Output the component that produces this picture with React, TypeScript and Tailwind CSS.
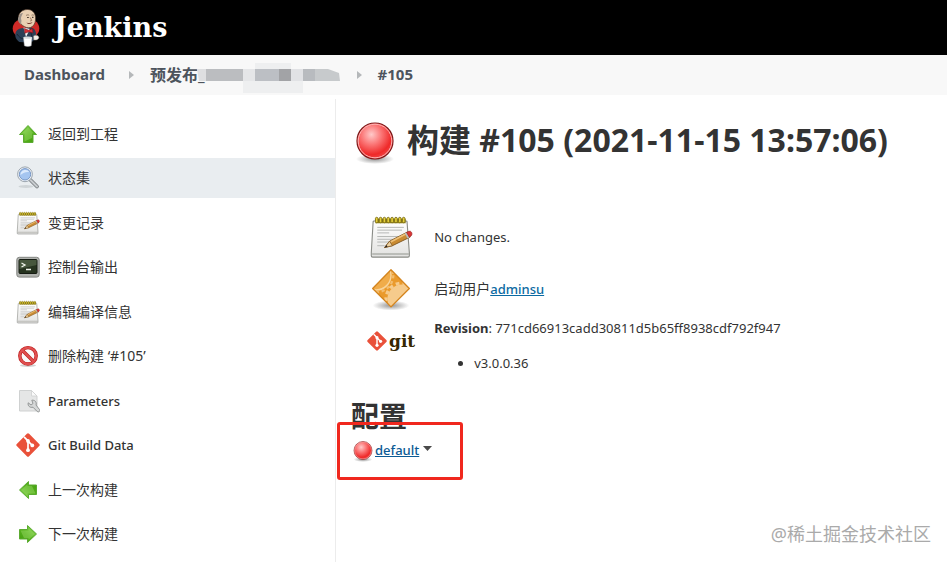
import type { ReactNode } from "react";

type IconProps = { className?: string };

type Task = {
  label: string;
  icon: ReactNode;
  active?: boolean;
  latin?: boolean;
};

function JenkinsLogo() {
  return (
    <svg viewBox="0 0 28 38" className="h-[38px] w-7 shrink-0" aria-hidden="true">
      <ellipse cx="14" cy="19.500" rx="13.300" ry="10.500" fill="#cf2a27" />
      <path d="M3.500 24c1-4 5-5 9-5l5-.5c4 0 6 2 6.500 6l-.5 5-3 3-5 1-8-.5c-3-2-5-5-4-9z" fill="#2c4057" />
      <path d="M5 25c2 3 4 5 8 5M18 20l2 8" fill="none" stroke="#16212e" strokeWidth=".8" />
      <path d="M6.500 8c.5-5 4.500-7.500 9-7.500s7.800 3 8 8c.2 4-.5 7-3.500 9.300-2 1.400-5 1.200-7.300 0C9 16 6.800 13 6.500 8z" fill="#e9d0b3" stroke="#4c382c" strokeWidth=".7" />
      <path d="M7 7.500c-1.500 1.500-1.500 4 0 6l2.200 2.200c-.5-2 .8-3.200 0-5.200-.8-2 .7-4 1.800-6.500-2.500 0-3.500 1.500-4 3.500z" fill="#9c9188" />
      <path d="M14 6.500c1.200-.8 2.200-.8 3.200-.2M19.500 6.200c1-.5 1.800-.3 2.500.2" fill="none" stroke="#7c6552" strokeWidth=".8" />
      <path d="M15.200 8.500h1.500M20.200 8.300h1.200" stroke="#2d211b" strokeWidth="1.200" />
      <path d="M18.300 8.500l1.400 3-1.600.5" fill="none" stroke="#8a5f49" strokeWidth=".8" />
      <path d="M14.500 13.500c2 .9 4.300.8 6-.5-.7 2-4.300 3-6 .5z" fill="#76352b" />
      <path d="M11.500 18.500l2.500 9.500 4-8z" fill="#f7f7f7" />
      <path d="M12.500 19.500l4 1.700 4-1.700.5 4.500-4.200-1.200-4 1.500z" fill="#db2b33" stroke="#731119" strokeWidth=".6" />
      <path d="M11.500 28.500h8.500l-.8 8.300c-2 .9-4.800.9-6.800 0z" fill="#fff" stroke="#a9adb0" strokeWidth=".5" />
      <ellipse cx="15.800" cy="28.700" rx="4.200" ry="1.100" fill="#d7dbdd" />
      <path d="M21.500 27c2.200-1.500 5-.8 5.300 1.200s-2 3.300-5 2.800z" fill="#f2efe9" stroke="#8b8078" strokeWidth=".5" />
    </svg>
  );
}

function ArrowIcon({ className = "" }: IconProps) {
  return (
    <svg viewBox="0 0 24 24" className={`size-6 ${className}`} aria-hidden="true">
      <defs>
        <linearGradient id="arrow-green" x1="0" y1="0" x2="1" y2="1">
          <stop offset="0" stopColor="#8fd95a" />
          <stop offset=".55" stopColor="#58b31e" />
          <stop offset="1" stopColor="#3f9a0c" />
        </linearGradient>
      </defs>
      <path d="M12 3.500L20.500 12.500H17V20.500H7.500V12.500H3.500z" fill="url(#arrow-green)" stroke="#5cab32" strokeWidth="1" strokeLinejoin="round" />
      <path d="M12 5.200L17.800 11.500H16V16L8.500 19.500V11.500H6z" fill="#b8ec8f" opacity=".3" />
    </svg>
  );
}

function SearchIcon() {
  return (
    <svg viewBox="0 0 24 24" className="size-6" aria-hidden="true">
      <ellipse cx="10" cy="20.500" rx="7.500" ry="1.500" fill="#cfd4d7" />
      <path d="M14.500 14l6.500 6.500" stroke="#7c8184" strokeWidth="3.800" strokeLinecap="round" />
      <path d="M14.500 14l6.500 6.500" stroke="#c8cccf" strokeWidth="2" strokeLinecap="round" />
      <circle cx="9" cy="8.300" r="7.400" fill="#f4f7fa" stroke="#929ca6" strokeWidth=".9" />
      <circle cx="9" cy="8.300" r="5.700" fill="#a5c5f0" stroke="#6f90c0" strokeWidth=".9" />
      <path d="M4.500 9c0-3 2-5 5-5 1.800 0 3 .8 3.800 2-3-.5-6 .5-8.800 3z" fill="#dceafc" />
    </svg>
  );
}

function NotepadIcon({ className = "size-6" }: IconProps) {
  return (
    <svg viewBox="0 0 48 48" className={className} aria-hidden="true">
      <defs>
        <linearGradient id="paper" x1="0" y1="0" x2="0" y2="1">
          <stop offset="0" stopColor="#ffffff" />
          <stop offset="1" stopColor="#e2e2e0" />
        </linearGradient>
      </defs>
      <path d="M5.500 6.500h35q1 0 1 1l2.500 33.500v3.500q0 1.500-1.500 1.500h-38.500q-1.500 0-1.500-1.500v-3.500l2-33.500q0-1 1-1z" fill="url(#paper)" stroke="#8a8c87" strokeWidth="1.200" />
      <path d="M3.500 42.500h40" stroke="#adafaa" strokeWidth="1.500" />
      <path d="M7 4h33v5H7z" fill="#8f7d10" />
      <g fill="#e5d038" stroke="#75671a" strokeWidth=".9">
        <rect x="7" y="2.500" width="2.800" height="6" rx="1.400" />
        <rect x="11.200" y="2.500" width="2.800" height="6" rx="1.400" />
        <rect x="15.400" y="2.500" width="2.800" height="6" rx="1.400" />
        <rect x="19.600" y="2.500" width="2.800" height="6" rx="1.400" />
        <rect x="23.800" y="2.500" width="2.800" height="6" rx="1.400" />
        <rect x="28" y="2.500" width="2.800" height="6" rx="1.400" />
        <rect x="32.200" y="2.500" width="2.800" height="6" rx="1.400" />
        <rect x="36.400" y="2.500" width="2.800" height="6" rx="1.400" />
      </g>
      <path d="M9 13.500h29M9 16.500h27M9 19.500h13M9 23.500h25M9 26.500h23M9 29.500h19M9 33.500h8" stroke="#b0b2b0" strokeWidth="1" />
      <path d="M17 35.500l5.500-7 19.500-10 3 5.500-19.500 9.500z" fill="#c98b32" stroke="#7e5520" strokeWidth="1" strokeLinejoin="round" />
      <path d="M23.500 29.500l17-9" stroke="#edc078" strokeWidth="1.800" />
      <path d="M17 35.500l5.500-7 3 5z" fill="#ecd0a0" stroke="#7e5520" strokeWidth=".8" />
      <path d="M17 35.500l2.200-2.800 1 1.800z" fill="#222" />
      <path d="M39 20l3 5.500 2-1-3-5.500z" fill="#b9bcbe" />
      <path d="M41 19l2.500-1.200q2-.6 3 1.200t-.3 3.500l-2.200 1.500z" fill="#d93636" stroke="#a02a2a" strokeWidth=".8" />
    </svg>
  );
}

function TerminalIcon() {
  return (
    <svg viewBox="0 0 24 24" className="size-6" aria-hidden="true">
      <rect x=".8" y="2.300" width="22.400" height="19.800" rx="2.500" fill="#b0b2ae" stroke="#838581" />
      <rect x="3" y="4.500" width="18" height="14" rx="1" fill="#26331f" stroke="#151b12" />
      <path d="M3.500 5h17v5L3.500 14z" fill="#596b4f" opacity=".65" />
      <path d="M5.500 8l3.500 2-3.500 2M10 14.500h5" fill="none" stroke="#f1f5ec" strokeWidth="1.300" />
    </svg>
  );
}

function StopIcon() {
  return (
    <svg viewBox="0 0 24 24" className="size-6" aria-hidden="true">
      <ellipse cx="12" cy="21.500" rx="8" ry="1.500" fill="#d2d2d2" />
      <circle cx="12" cy="11.800" r="8.200" fill="#fafafa" stroke="#bd1c1c" strokeWidth="3.400" />
      <path d="M6.500 6.500l11 11" stroke="#bd1c1c" strokeWidth="3.400" />
      <circle cx="12" cy="11.800" r="8.200" fill="none" stroke="#e05050" strokeWidth="2.200" />
      <path d="M6.500 6.500l11 11" stroke="#e05050" strokeWidth="2.200" />
    </svg>
  );
}

function ParametersIcon() {
  return (
    <svg viewBox="0 0 24 24" className="size-6" aria-hidden="true">
      <path d="M3.500 1.500h12l5.500 5.500v15h-17.500z" fill="#e5e6e6" stroke="#cfd1d1" />
      <path d="M15.500 1.500v5.500h5.500z" fill="#fafafa" stroke="#cfd1d1" strokeWidth=".8" />
      <path d="M12.200 13.800l2.800 2.200 2-1.500-1.200-3.300c3-.5 5.200 2 4.200 4.800l3.500 4.500c1 1.800-1 3.200-2.300 2l-4.200-4.300c-3 .8-5.500-1.200-4.800-4.400z" fill="#d6d8d8" stroke="#8b8e8e" strokeWidth=".9" strokeLinejoin="round" />
    </svg>
  );
}

function GitMark({ className = "size-6" }: IconProps) {
  return (
    <svg viewBox="0 0 24 24" className={className} aria-hidden="true">
      <path d="M10.900.8q1.100-1.100 2.200 0l10.100 10.100q1.100 1.100 0 2.200L13.100 23.200q-1.100 1.100-2.200 0L.8 13.100q-1.100-1.100 0-2.200z" fill="#e9513a" />
      <path d="M8 3.800l4 4V17M12 8.200l4.200 4.200" fill="none" stroke="#fff" strokeWidth="1.700" />
      <circle cx="12" cy="8" r="1.900" fill="#fff" />
      <circle cx="12" cy="17.200" r="1.900" fill="#fff" />
      <circle cx="16.300" cy="12.400" r="1.900" fill="#fff" />
    </svg>
  );
}

function RedBall({ className = "" }: IconProps) {
  return (
    <svg viewBox="0 0 48 48" className={className} role="img" aria-label="Failed">
      <defs>
        <radialGradient id="ball" cx=".4" cy=".32" r=".7">
          <stop offset="0" stopColor="#ffc9c9" />
          <stop offset=".4" stopColor="#fb7676" />
          <stop offset=".8" stopColor="#ef2929" />
          <stop offset="1" stopColor="#f04a4a" />
        </radialGradient>
        <radialGradient id="ball-shadow">
          <stop offset="0" stopColor="#777" stopOpacity=".8" />
          <stop offset="1" stopColor="#777" stopOpacity="0" />
        </radialGradient>
      </defs>
      <ellipse cx="24" cy="43" rx="19" ry="5" fill="url(#ball-shadow)" />
      <circle cx="24" cy="25" r="18" fill="url(#ball)" stroke="#7d1b1b" strokeWidth="1.200" />
      <circle cx="24" cy="25" r="16.800" fill="none" stroke="#ffb4b4" strokeWidth="1" />
    </svg>
  );
}

function UserCauseIcon() {
  return (
    <svg viewBox="0 0 48 48" className="mx-auto size-11" aria-hidden="true">
      <defs>
        <clipPath id="cause-diamond">
          <path d="M24 3l20 20.500L24 43.500 4 23.500z" />
        </clipPath>
        <radialGradient id="cause-shadow">
          <stop offset="0" stopColor="#666" stopOpacity=".7" />
          <stop offset="1" stopColor="#666" stopOpacity="0" />
        </radialGradient>
      </defs>
      <ellipse cx="24" cy="42" rx="20" ry="5.500" fill="url(#cause-shadow)" />
      <g clipPath="url(#cause-diamond)">
        <path d="M0 0h48v48H0z" fill="#ea9a2c" />
        <circle cx="8" cy="9" r="16" fill="#f0ac4a" stroke="#f8d49b" strokeWidth="1.600" />
        <circle cx="8" cy="9" r="18.500" fill="none" stroke="#f3bd6f" strokeWidth="2.500" strokeDasharray="3.500 3" />
        <circle cx="36" cy="35" r="16" fill="#f6cb8c" />
        <circle cx="36" cy="35" r="17.500" fill="none" stroke="#f6cb8c" strokeWidth="3.500" strokeDasharray="4 3.500" />
      </g>
      <path d="M24 3l20 20.500L24 43.500 4 23.500z" fill="none" stroke="#d4851f" strokeWidth="1.500" strokeLinejoin="round" />
    </svg>
  );
}

// Blocks that hide the rest of the project name
function MaskedName() {
  return (
    <svg viewBox="0 -6 144 36" className="-ml-2 h-9 w-36" aria-hidden="true">
      <path d="M0 6h10v12H2z" fill="#dedfe1" />
      <path d="M9 6h37v12H9z" fill="#bbbdc0" />
      <path d="M58 0h36v6H58zM46 6h12v24H46zM58 18h48v12H58z" fill="#eeeff0" />
      <path d="M46 6h12v12H46z" fill="#e5e6e8" />
      <path d="M58 6h24v12H58z" fill="#bcbfc4" />
      <path d="M82 6h12v12H82z" fill="#a2a3a6" />
      <path d="M94 6h12v12H94z" fill="#e1e2e5" />
      <path d="M106 6h12v12h-12z" fill="#b8bbbf" />
      <path d="M118 6h13l11 4 1 8h-25z" fill="#c7cacc" />
    </svg>
  );
}

function CrumbArrow({ className = "" }: IconProps) {
  return (
    <svg viewBox="0 0 5 8" className={`h-2 w-[5px] ${className}`} aria-hidden="true">
      <path d="M0 0l5 4-5 4z" fill="#b5b8ba" />
    </svg>
  );
}

const tasks: Task[] = [
  { label: "返回到工程", icon: <ArrowIcon /> },
  { label: "状态集", icon: <SearchIcon />, active: true },
  { label: "变更记录", icon: <NotepadIcon /> },
  { label: "控制台输出", icon: <TerminalIcon /> },
  { label: "编辑编译信息", icon: <NotepadIcon /> },
  { label: "删除构建 ‘#105’", icon: <StopIcon /> },
  { label: "Parameters", icon: <ParametersIcon />, latin: true },
  { label: "Git Build Data", icon: <GitMark />, latin: true },
  { label: "上一次构建", icon: <ArrowIcon className="-rotate-90" /> },
  { label: "下一次构建", icon: <ArrowIcon className="rotate-90" /> },
];

export default function App() {
  return (
    <div className="relative flex min-h-screen flex-col bg-white font-['Noto_Sans','Noto_Sans_CJK_SC',sans-serif] text-sm text-[#333]">
      <header className="flex h-[55px] items-center bg-black px-3">
        <a href="#" className="flex items-center gap-3.5 text-white">
          <JenkinsLogo />
          <span className="font-['DejaVu_Serif',serif] text-[27px] font-bold leading-8">Jenkins</span>
        </a>
      </header>

      <nav className="flex h-10 items-center bg-[#f8f8f8] px-6 text-[15px] font-bold text-[#4d545d]">
        <a href="#">Dashboard</a>
        <CrumbArrow className="ml-6 mr-4" />
        <a href="#" className="flex items-center text-base">
          预发布_
          <MaskedName />
        </a>
        <CrumbArrow className="mx-4" />
        <a href="#">#105</a>
      </nav>

      <div className="flex flex-1 pt-1">
        <aside className="w-[336px] shrink-0 border-r border-[#ececec] pt-[15px]">
          <ul>
            {tasks.map((task) => (
              <li key={task.label} className="odd:mb-1 even:mb-[5px]">
                <a
                  href="#"
                  className={`flex h-10 items-center gap-2 px-4 ${task.active ? "bg-[#e9edf0]" : ""} ${task.latin ? "text-[13px] font-medium" : ""}`}
                >
                  {task.icon}
                  <span>{task.label}</span>
                </a>
              </li>
            ))}
          </ul>
        </aside>

        <main className="min-w-0 flex-1 pl-[15px] pt-4">
          <h1 className="flex items-center gap-2 text-[32px] font-bold leading-[50px]">
            <RedBall className="size-12 shrink-0" />
            构建 #105 (2021-11-15 13:57:06)
          </h1>

          <table className="ml-4 mt-[46px] text-[13px] leading-5">
            <tbody>
              <tr className="h-[52px]">
                <td className="pr-[19px]">
                  <NotepadIcon className="mx-auto size-11" />
                </td>
                <td>No changes.</td>
              </tr>
              <tr className="h-[52px]">
                <td className="pr-[19px]">
                  <UserCauseIcon />
                </td>
                <td>
                  <span className="text-sm">启动用户</span>
                  <a href="#" className="font-medium text-[#0b6aa2] underline">adminsu</a>
                </td>
              </tr>
              <tr className="align-top">
                <td className="pr-[19px] pt-4">
                  <div className="flex items-center gap-0.5">
                    <GitMark className="size-5" />
                    <span className="font-['DejaVu_Serif',serif] text-[17px] font-bold leading-5 text-[#362701]">git</span>
                  </div>
                </td>
                <td className="pt-[3px]">
                  <b>Revision</b>: 771cd66913cadd30811d5b65ff8938cdf792f947
                  <ul className="mt-[15px] list-disc pl-10">
                    <li>v3.0.0.36</li>
                  </ul>
                </td>
              </tr>
            </tbody>
          </table>

          <h2 className="mt-[23px] text-[28px] font-bold leading-10">配置</h2>
          <div className="relative flex h-7 items-center text-[13px]">
            <RedBall className="size-6" />
            <a href="#" className="font-medium text-[#0b5a94] underline">default</a>
            <button type="button" aria-label="default" className="ml-1 pb-1">
              <svg viewBox="0 0 9 5" className="h-[5px] w-[9px]" aria-hidden="true">
                <path d="M0 0h9L4.500 5z" fill="#4a4a4a" />
              </svg>
            </button>
            <div className="absolute -left-3.5 -top-3.5 h-[58px] w-[126px] rounded-[3px] border-3 border-[#f0281e]" />
          </div>
        </main>
      </div>

      <div className="absolute bottom-4 right-4 text-[18px] leading-6 text-[#aaa]">@稀土掘金技术社区</div>
    </div>
  );
}
